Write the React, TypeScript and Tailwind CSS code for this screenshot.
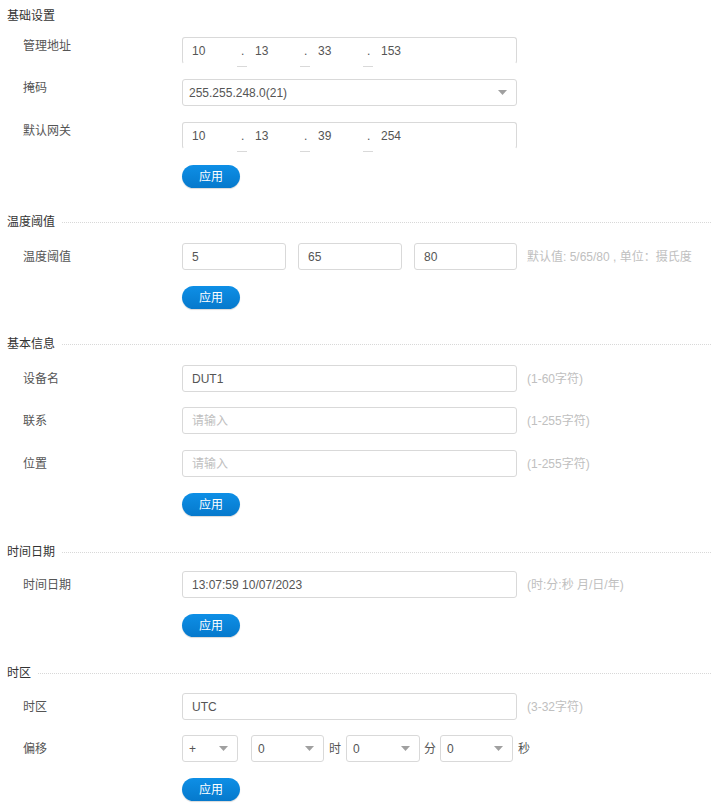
import React from "react";

const font = { fontFamily: '"Liberation Sans", "Noto Sans CJK SC", sans-serif' };

function Arrow() {
  return (
    <svg width="9" height="5" viewBox="0 0 9 5" className="shrink-0">
      <path d="M0 0 L9 0 L4.5 5 Z" fill="#a0a0a0" />
    </svg>
  );
}

function Header({ title, className = "", line = true }: { title: string; className?: string; line?: boolean }) {
  return (
    <div className={`flex h-5 items-center pl-[7px] ${className}`}>
      <span className="text-[12px] text-[#333]">{title}</span>
      {line && <div className="ml-[7px] flex-1 border-t border-dotted border-[#d8d8d8]" />}
    </div>
  );
}

function Row({
  label,
  children,
  hint,
  labelUp = false,
  className = "",
}: {
  label: string;
  children: React.ReactNode;
  hint?: string;
  labelUp?: boolean;
  className?: string;
}) {
  return (
    <div className={`flex h-[27px] items-center ${className}`}>
      <div className={`w-[182px] shrink-0 pl-[23px] text-[12px] text-[#555] ${labelUp ? "-mt-[10px]" : ""}`}>
        {label}
      </div>
      {children}
      {hint && <span className="ml-[10px] text-[12px] text-[#c0c0c0]">{hint}</span>}
    </div>
  );
}

function Input({ value, placeholder, w = "w-[335px]" }: { value?: string; placeholder?: string; w?: string }) {
  return (
    <div
      className={`flex h-[27px] ${w} shrink-0 items-center rounded-[3px] border border-[#d9d9d9] bg-white px-[9px] text-[12px] ${
        value ? "text-[#555]" : "text-[#c0c0c0]"
      }`}
    >
      {value ?? placeholder}
    </div>
  );
}

function Select({ value, w }: { value: string; w: string }) {
  return (
    <div
      className={`flex h-[27px] ${w} shrink-0 items-center justify-between rounded-[3px] border border-[#d9d9d9] bg-white pl-[6px] pr-[9px] text-[12px] text-[#555]`}
    >
      <span>{value}</span>
      <Arrow />
    </div>
  );
}

function IpInput({ parts }: { parts: string[] }) {
  return (
    <div className="relative flex h-[27px] w-[335px] shrink-0 items-center rounded-[3px] border border-b-transparent border-[#d9d9d9] bg-white pl-[9px] text-[12px] text-[#555]">
      {parts.map((p, i) => (
        <div key={i} className="flex w-[63px] shrink-0 items-center">
          <span className="w-[45px]">{p}</span>
          {i < 3 && (
            <span className="relative w-[18px] pl-[4px]">
              .
              <span className="absolute -bottom-[7px] left-[0px] h-px w-[10px] bg-[#d9d9d9]" />
            </span>
          )}
        </div>
      ))}
    </div>
  );
}

function ApplyButton({ className = "" }: { className?: string }) {
  return (
    <div className={`pl-[182px] ${className}`}>
      <button className="flex h-[23px] w-[58px] items-center justify-center rounded-full bg-gradient-to-b from-[#0e8fe6] to-[#0679cc] text-[12px] text-white shadow-[0_1px_1px_rgba(0,0,0,0.15)]">
        应用
      </button>
    </div>
  );
}

export default function App() {
  return (
    <div className="min-h-screen w-[711px] bg-white" style={font}>
      <Header title="基础设置" line={false} className="pt-[6px] h-[26px]" />
      <div className="mt-[11px] flex flex-col">
        <Row label="管理地址" labelUp>
          <IpInput parts={["10", "13", "33", "153"]} />
        </Row>
        <Row label="掩码" labelUp className="mt-[15px]">
          <Select value="255.255.248.0(21)" w="w-[335px]" />
        </Row>
        <Row label="默认网关" labelUp className="mt-[16px]">
          <IpInput parts={["10", "13", "39", "254"]} />
        </Row>
      </div>
      <ApplyButton className="mt-[16px]" />

      <Header title="温度阈值" className="mt-[24px]" />
      <Row label="温度阈值" hint="默认值: 5/65/80 , 单位：摄氏度" className="mt-[11px]">
        <div className="flex gap-[12px]">
          <Input value="5" w="w-[104px]" />
          <Input value="65" w="w-[104px]" />
          <Input value="80" w="w-[103px]" />
        </div>
      </Row>
      <ApplyButton className="mt-[16px]" />

      <Header title="基本信息" className="mt-[25px]" />
      <Row label="设备名" hint="(1-60字符)" className="mt-[11px]">
        <Input value="DUT1" />
      </Row>
      <Row label="联系" hint="(1-255字符)" className="mt-[15px]">
        <Input placeholder="请输入" />
      </Row>
      <Row label="位置" hint="(1-255字符)" className="mt-[16px]">
        <Input placeholder="请输入" />
      </Row>
      <ApplyButton className="mt-[16px]" />

      <Header title="时间日期" className="mt-[26px]" />
      <Row label="时间日期" hint="(时:分:秒 月/日/年)" className="mt-[9px]">
        <Input value="13:07:59 10/07/2023" />
      </Row>
      <ApplyButton className="mt-[16px]" />

      <Header title="时区" className="mt-[26px]" />
      <Row label="时区" hint="(3-32字符)" className="mt-[10px]">
        <Input value="UTC" />
      </Row>
      <Row label="偏移" className="mt-[15px]">
        <div className="flex items-center text-[12px] text-[#555]">
          <Select value="+" w="w-[56px]" />
          <div className="w-[13px]" />
          <Select value="0" w="w-[73px]" />
          <span className="mx-[5px]">时</span>
          <Select value="0" w="w-[74px]" />
          <span className="mx-[4px]">分</span>
          <Select value="0" w="w-[73px]" />
          <span className="ml-[5px]">秒</span>
        </div>
      </Row>
      <ApplyButton className="mt-[16px]" />
    </div>
  );
}
